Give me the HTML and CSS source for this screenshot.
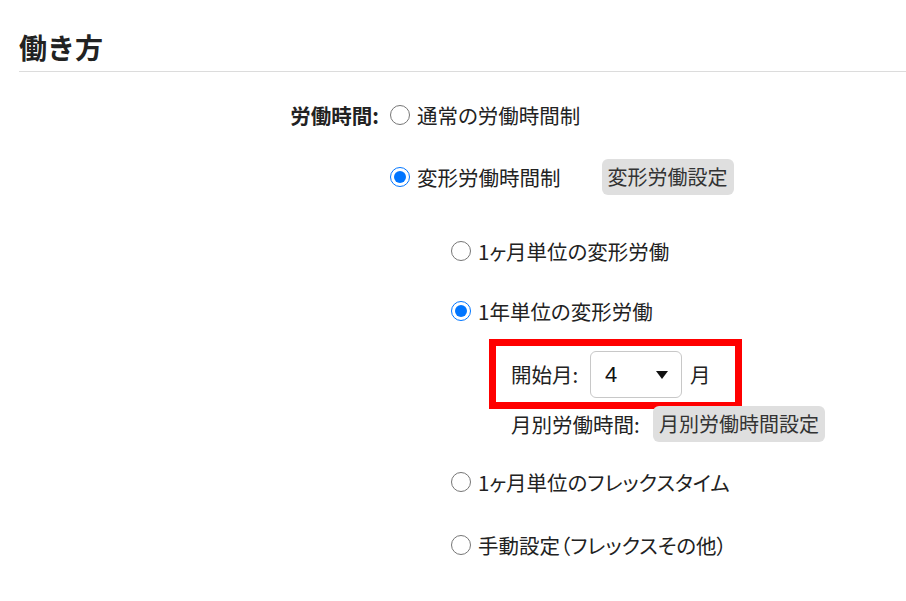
FILE: index.html
```html
<!DOCTYPE html>
<html lang="ja">
<head>
<meta charset="utf-8">
<title>働き方</title>
<link rel="stylesheet" href="styles.css">
</head>
<body>
<div class="page">
  <h2 class="title">働き方</h2>
  <div class="form">
    <div class="row row1">
      <span class="field-label">労働時間:</span>
      <label class="opt"><input type="radio" name="wt" class="radio"><span>通常の労働時間制</span></label>
    </div>
    <div class="row row2">
      <label class="opt"><input type="radio" name="wt" class="radio" checked><span>変形労働時間制</span></label>
      <button class="btn btn-henkei">変形労働設定</button>
    </div>
    <div class="nested">
      <div class="row row3">
        <label class="opt"><input type="radio" name="hk" class="radio"><span>1ヶ月単位の変形労働</span></label>
      </div>
      <div class="row row4">
        <label class="opt"><input type="radio" name="hk" class="radio" checked><span>1年単位の変形労働</span></label>
      </div>
      <div class="highlight">
        <span class="sub-label start-label">開始月:</span>
        <div class="select-wrap">
          <select class="select">
            <option>1</option><option>2</option><option>3</option>
            <option selected>4</option><option>5</option><option>6</option>
            <option>7</option><option>8</option><option>9</option>
            <option>10</option><option>11</option><option>12</option>
          </select>
        </div>
        <span class="unit">月</span>
      </div>
      <div class="row monthly">
        <span class="sub-label monthly-label">月別労働時間:</span>
        <button class="btn">月別労働時間設定</button>
      </div>
      <div class="row row5">
        <label class="opt"><input type="radio" name="hk" class="radio"><span>1ヶ月単位のフレックスタイム</span></label>
      </div>
      <div class="row row6">
        <label class="opt"><input type="radio" name="hk" class="radio"><span>手動設定（フレックスその他）</span></label>
      </div>
    </div>
  </div>
</div>
</body>
</html>
```
FILE: styles.css
```css
html, body {
  margin: 0;
  padding: 0;
  background: #fff;
}
body {
  font-family: "Noto Sans CJK JP", "Noto Sans", sans-serif;
  color: #222;
  font-size: 20.5px;
}
.page {
  padding-left: 19px;
}
.title {
  margin: 29px 0 0 0;
  font-size: 28px;
  line-height: 36px;
  font-weight: 700;
  padding: 0 0 6px 0;
  border-bottom: 1px solid #dcdcdc;
  color: #222;
}
.row {
  display: flex;
  align-items: center;
  height: 36px;
}
.field-label {
  width: 360px;
  text-align: right;
  font-weight: 700;
  margin-right: 11px;
}
.opt {
  display: flex;
  align-items: center;
  white-space: nowrap;
  font-feature-settings: "palt";
}
.radio {
  width: 20px;
  height: 20px;
  margin: 0 7px 0 0;
}
.row1 { margin-top: 25px; }
.row2 { margin-top: 26px; padding-left: 371px; }
.btn {
  font-family: inherit;
  font-size: 20px;
  height: 36px;
  padding: 0 6px;
  border: none;
  border-radius: 6px;
  background: #dfdfdf;
  color: #333;
  line-height: 36px;
}
.btn-henkei { margin-left: 41px; }
.nested { margin-left: 432px; }
.row3 { margin-top: 38px; }
.row4 { margin-top: 24px; }
.highlight {
  display: inline-flex;
  align-items: center;
  box-sizing: border-box;
  height: 70px;
  margin-top: 10px;
  margin-left: 38px;
  border: 7px solid #ff0000;
  padding: 0 24px 0 15px;
}
.start-label { width: 79px; }
.select-wrap {
  position: relative;
  width: 92px;
  height: 47px;
}
.select {
  appearance: none;
  -webkit-appearance: none;
  box-sizing: border-box;
  width: 92px;
  height: 47px;
  border: 1px solid #c8c8c8;
  border-radius: 6px;
  background: #fff;
  font-family: "Liberation Sans", Arial, sans-serif;
  font-size: 22px;
  color: #111;
  padding: 0 0 0 14px;
}
.select-wrap::after {
  content: "";
  position: absolute;
  right: 14px;
  top: 20px;
  border-left: 6px solid transparent;
  border-right: 6px solid transparent;
  border-top: 8px solid #111;
  pointer-events: none;
}
.unit { margin-left: 8px; }
.monthly { margin-top: -3px; padding-left: 60px; }
.monthly-label { width: 142px; }
.row5 { margin-top: 22px; }
.row6 { margin-top: 27px; }
```
